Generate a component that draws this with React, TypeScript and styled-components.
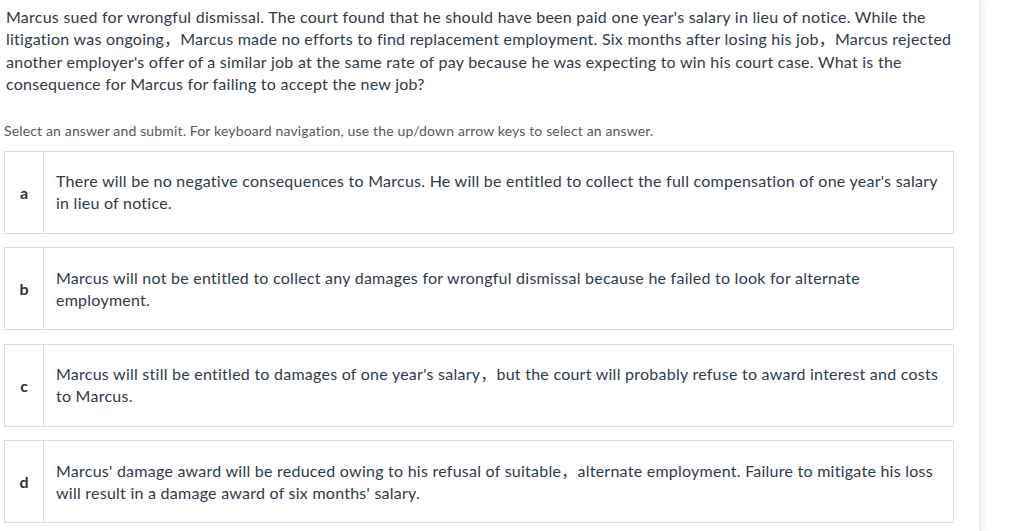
import React from 'react';
import styled, { createGlobalStyle } from 'styled-components';

const Global = createGlobalStyle`
  html, body {
    margin: 0;
    padding: 0;
    background: #fff;
  }
  body {
    font-family: 'Source Sans Pro', Lato, 'Noto Sans CJK SC', sans-serif;
    color: #2f3b4b;
  }
`;

const Page = styled.div`
  display: flex;
  width: 1028px;
  height: 531px;
  overflow: hidden;
`;

const Main = styled.main`
  flex: 1;
  min-width: 0;
  padding: 6px 25px 0 4px;
`;

const Side = styled.aside`
  width: 49px;
  flex-shrink: 0;
  background: #fff;
  box-shadow: inset 7px 0 6px -4px rgba(0, 0, 0, 0.09);
`;

const Question = styled.p`
  margin: 0 0 0 2px;
  font-size: 16px;
  line-height: 22.4px;
  letter-spacing: 0.25px;
  color: #2f3b4b;
`;

const Hint = styled.p`
  margin: 25px 0 10px 0;
  font-size: 14px;
  line-height: 20px;
  letter-spacing: 0.15px;
  color: #555a60;
`;

const Options = styled.ul`
  list-style: none;
  margin: 0;
  padding: 0;
  display: flex;
  flex-direction: column;
  gap: 13.6px;
`;

const Option = styled.li`
  display: flex;
  height: 83px;
  box-sizing: border-box;
  border: 1px solid #dcdcdf;
  background: #fff;
  cursor: pointer;
`;

const Letter = styled.div`
  width: 38px;
  flex-shrink: 0;
  display: flex;
  align-items: center;
  justify-content: center;
  border-right: 1px solid #dcdcdf;
  font-size: 16px;
  font-weight: 700;
  color: #333;
`;

const Text = styled.div`
  flex: 1;
  display: flex;
  align-items: center;
  padding: 0 12px;
  font-size: 16px;
  line-height: 22px;
  letter-spacing: 0.25px;
  color: #2f3b4b;
`;

const answers: { key: string; lines: string[] }[] = [
  {
    key: 'a',
    lines: [
      "There will be no negative consequences to Marcus. He will be entitled to collect the full compensation of one year's salary",
      'in lieu of notice.',
    ],
  },
  {
    key: 'b',
    lines: [
      'Marcus will not be entitled to collect any damages for wrongful dismissal because he failed to look for alternate',
      'employment.',
    ],
  },
  {
    key: 'c',
    lines: [
      "Marcus will still be entitled to damages of one year's salary，but the court will probably refuse to award interest and costs",
      'to Marcus.',
    ],
  },
  {
    key: 'd',
    lines: [
      "Marcus' damage award will be reduced owing to his refusal of suitable，alternate employment. Failure to mitigate his loss",
      "will result in a damage award of six months' salary.",
    ],
  },
];

const questionLines = [
  "Marcus sued for wrongful dismissal. The court found that he should have been paid one year's salary in lieu of notice. While the",
  'litigation was ongoing，Marcus made no efforts to find replacement employment. Six months after losing his job，Marcus rejected',
  "another employer's offer of a similar job at the same rate of pay because he was expecting to win his court case. What is the",
  'consequence for Marcus for failing to accept the new job?',
];

const Lines: React.FC<{ lines: string[] }> = ({ lines }) => (
  <>
    {lines.map((l, i) => (
      <React.Fragment key={i}>
        {l}
        {i < lines.length - 1 && <br />}
      </React.Fragment>
    ))}
  </>
);

export default function App() {
  return (
    <Page>
      <Global />
      <Main>
        <Question>
          <Lines lines={questionLines} />
        </Question>
        <Hint>
          Select an answer and submit. For keyboard navigation, use the up/down arrow keys to select an answer.
        </Hint>
        <Options>
          {answers.map((a) => (
            <Option key={a.key}>
              <Letter>{a.key}</Letter>
              <Text>
                <div>
                  <Lines lines={a.lines} />
                </div>
              </Text>
            </Option>
          ))}
        </Options>
      </Main>
      <Side />
    </Page>
  );
}
